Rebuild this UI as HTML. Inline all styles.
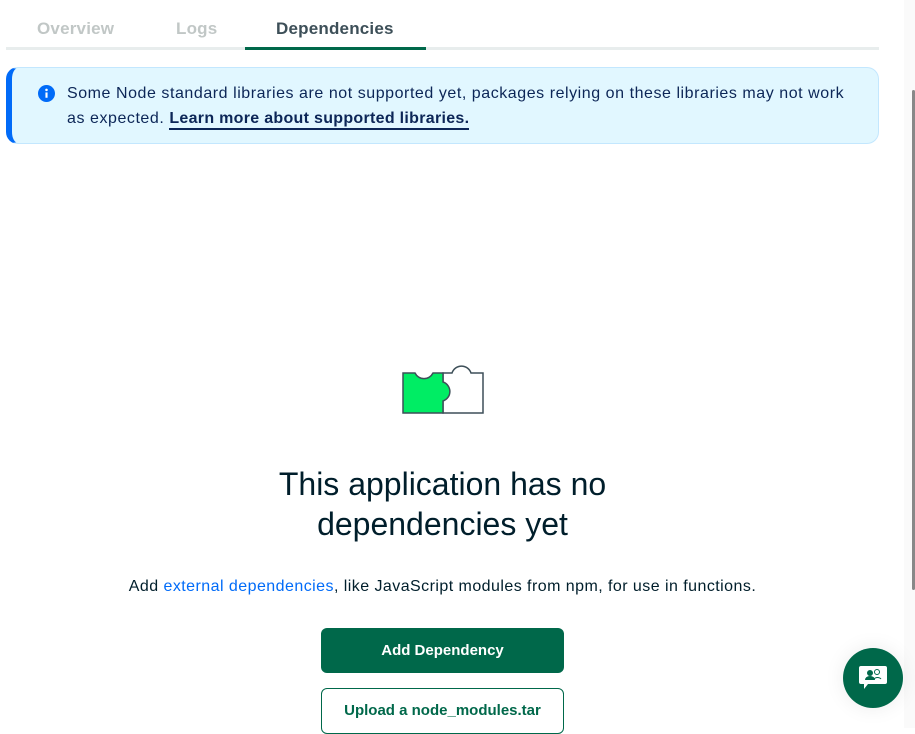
<!DOCTYPE html>
<html><head><style>
*{box-sizing:border-box;margin:0;padding:0}
body{width:915px;height:728px;overflow:hidden;background:#fff;font-family:"Liberation Sans",sans-serif;position:relative;color:#001e2b}
.tabline{position:absolute;left:6px;top:47px;width:873px;height:3px;background:#e8eded}
.act{position:absolute;left:245px;top:47px;width:181px;height:3px;background:#00684a}
.tab{position:absolute;top:19px;font-size:17px;font-weight:bold;color:#c1c7c6;letter-spacing:.2px}
.banner{position:absolute;left:6px;top:67px;width:873px;height:77px;background:#e1f7ff;border:1px solid #c3e7fe;border-left:6px solid #016bf8;border-radius:12px}
.btxt{position:absolute;left:55px;top:13px;width:810px;font-size:16px;letter-spacing:.55px;line-height:25px;color:#0c2657;white-space:nowrap}
.btxt b{border-bottom:2px solid #0c2657;padding-bottom:1px;letter-spacing:.3px}
h1{position:absolute;left:0;width:885px;top:464px;text-align:center;font-size:32px;line-height:40px;font-weight:normal;color:#001e2b}
p.d{position:absolute;left:0;width:885px;top:578px;text-align:center;font-size:16px;letter-spacing:.45px;color:#001e2b}
p.d span{color:#016bf8}
.b1{position:absolute;left:321px;top:628px;width:243px;height:45px;background:#00684a;border-radius:6px;color:#fff;font-weight:bold;font-size:15px;text-align:center;line-height:45px}
.b2{position:absolute;left:321px;top:688px;width:243px;height:46px;background:#fff;border:1px solid #00684a;border-radius:6px;color:#00684a;font-weight:bold;font-size:15px;text-align:center;line-height:44px}
.fab{position:absolute;left:843px;top:648px;width:60px;height:60px;border-radius:50%;background:#00684a;box-shadow:0 0 20px rgba(0,0,0,.08)}
.sb{position:absolute;left:912px;top:90px;width:3px;height:500px;background:#888;border-radius:2px}
.strip{position:absolute;left:904px;top:0;width:11px;height:728px;background:#fafafa}
</style></head><body>
<div class="strip"></div>
<div class="sb"></div>
<div class="tabline"></div><div class="act"></div>
<div class="tab" style="left:37px">Overview</div>
<div class="tab" style="left:176px">Logs</div>
<div class="tab" style="left:276px;color:#3d4f58">Dependencies</div>
<div class="banner">
<svg style="position:absolute;left:26px;top:17px" width="17" height="17" viewBox="0 0 16 16"><circle cx="8" cy="8" r="8" fill="#016bf8"/><rect x="7" y="7" width="2" height="5" fill="#fff"/><circle cx="8" cy="4.6" r="1.2" fill="#fff"/></svg>
<div class="btxt">Some Node standard libraries are not supported yet, packages relying on these libraries may not work<br>as expected. <b>Learn more about supported libraries.</b></div>
</div>
<svg style="position:absolute;left:400px;top:360px" width="86" height="56" viewBox="0 0 86 56">
<path d="M43 13 H52 A10 10 0 0 1 71 13 H83 V53 H43 Z" fill="#fff" stroke="#3d4f58" stroke-width="1.5"/>
<path d="M3 13 H15 A10 10 0 0 0 33 13 H43 V22 A10 10 0 0 1 43 41 V53 H3 Z" fill="#00ed64" stroke="#3d4f58" stroke-width="1.5"/>
</svg>
<h1>This application has no<br>dependencies yet</h1>
<p class="d">Add <span>external dependencies</span>, like JavaScript modules from npm, for use in functions.</p>
<div class="b1">Add Dependency</div>
<div class="b2">Upload a node_modules.tar</div>
<div class="fab"><svg style="position:absolute;left:15px;top:17px" width="30" height="28" viewBox="0 0 30 28"><path d="M3 1 H27 A2 2 0 0 1 29 3 V17 A2 2 0 0 1 27 19 H10 L6 24 V19 H3 A2 2 0 0 1 1 17 V3 A2 2 0 0 1 3 1 Z" fill="#fff"/><circle cx="12" cy="8" r="3" fill="#00684a"/><path d="M7 15 A5 4 0 0 1 17 15 Z" fill="#00684a"/><circle cx="19" cy="7" r="2.5" fill="none" stroke="#00684a" stroke-width="1"/><path d="M16 14 A4 3 0 0 1 23 14" fill="none" stroke="#00684a" stroke-width="1"/></svg></div>
</body></html>
